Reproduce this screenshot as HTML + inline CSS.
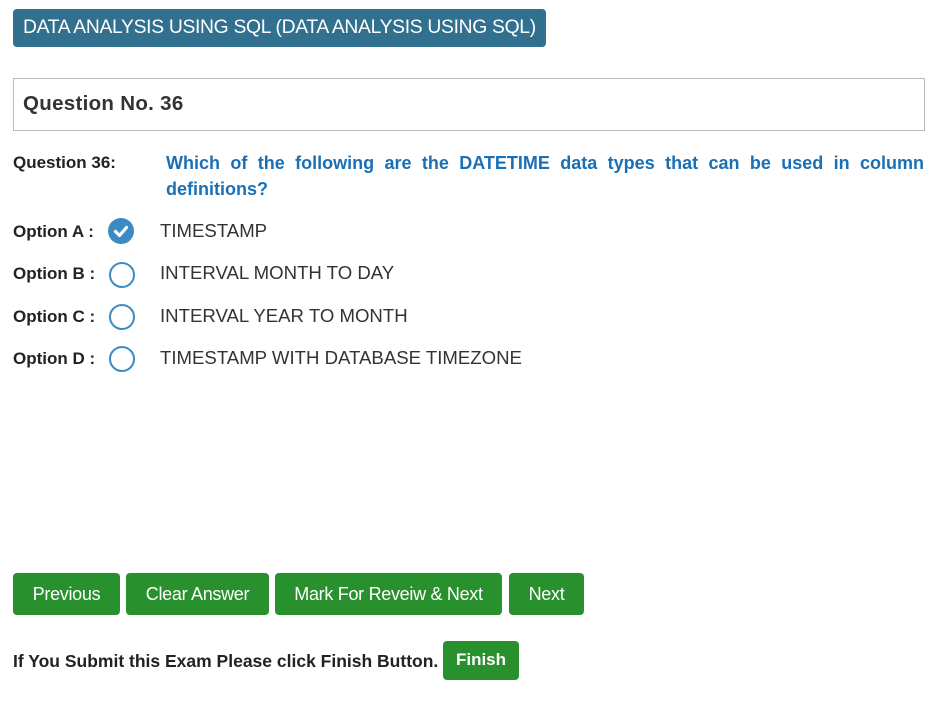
<!DOCTYPE html>
<html><head><style>
body{margin:0;width:934px;height:714px;background:#fff;font-family:"Liberation Sans",Arial,sans-serif;position:relative;overflow:hidden;color:#333}
.a{position:absolute}
.hdr{left:13px;top:9px;width:533px;height:38px;background:#31708f;border-radius:4px;color:#fff;font-size:19.3px;line-height:38px;letter-spacing:-0.3px;white-space:nowrap}
.hdr span{position:absolute;left:10px}
.qbox{left:13px;top:78px;width:910px;height:51px;border:1px solid #bbb;}
.qbox span{position:absolute;left:9px;top:13px;font-weight:bold;font-size:20.5px;letter-spacing:0.3px;color:#333}
.lbl{font-weight:bold;font-size:17px;color:#222;white-space:nowrap}
.qt{left:166px;top:150px;width:758px;font-weight:bold;font-size:18px;line-height:26px;color:#1a6fb5;text-align:justify}
.opt{font-size:18.6px;color:#333;white-space:nowrap}
.c{border:2px solid #3a8bc2;border-radius:50%;box-sizing:border-box}
.btn{top:573px;height:42px;background:#28902c;border-radius:4px;color:#fff;font-size:18px;line-height:42px;text-align:center;letter-spacing:-0.3px}
</style></head><body>
<div class="a hdr"><span>DATA ANALYSIS USING SQL (DATA ANALYSIS USING SQL)</span></div>
<div class="a qbox"><span>Question No. 36</span></div>
<div class="a lbl" style="left:13px;top:153px">Question 36:</div>
<div class="a qt">Which of the following are the DATETIME data types that can be used in column definitions?</div>

<div class="a lbl" style="left:13px;top:222px">Option A :</div>
<div class="a" style="left:108px;top:218px;width:26px;height:26px;border-radius:50%;background:#3a8bc2">
<svg width="26" height="26" viewBox="0 0 26 26"><path d="M7.5 13.5l4 4 7-8" stroke="#fff" stroke-width="3.2" fill="none" stroke-linecap="round" stroke-linejoin="round"/></svg></div>
<div class="a opt" style="left:160px;top:220px">TIMESTAMP</div>

<div class="a lbl" style="left:13px;top:264px">Option B :</div>
<div class="a c" style="left:109px;top:262px;width:26px;height:26px"></div>
<div class="a opt" style="left:160px;top:262px">INTERVAL MONTH TO DAY</div>

<div class="a lbl" style="left:13px;top:307px">Option C :</div>
<div class="a c" style="left:109px;top:304px;width:26px;height:26px"></div>
<div class="a opt" style="left:160px;top:305px">INTERVAL YEAR TO MONTH</div>

<div class="a lbl" style="left:13px;top:349px">Option D :</div>
<div class="a c" style="left:109px;top:346px;width:26px;height:26px"></div>
<div class="a opt" style="left:160px;top:347px">TIMESTAMP WITH DATABASE TIMEZONE</div>

<div class="a btn" style="left:13px;width:107px">Previous</div>
<div class="a btn" style="left:126px;width:143px">Clear Answer</div>
<div class="a btn" style="left:275px;width:227px">Mark For Reveiw &amp; Next</div>
<div class="a btn" style="left:509px;width:75px">Next</div>

<div class="a lbl" style="left:13px;top:651px;font-size:17.5px">If You Submit this Exam Please click Finish Button.</div>
<div class="a" style="left:443px;top:641px;width:76px;height:39px;background:#28902c;border-radius:4px;color:#fff;font-weight:bold;font-size:17px;line-height:38px;text-align:center">Finish</div>
</body></html>
